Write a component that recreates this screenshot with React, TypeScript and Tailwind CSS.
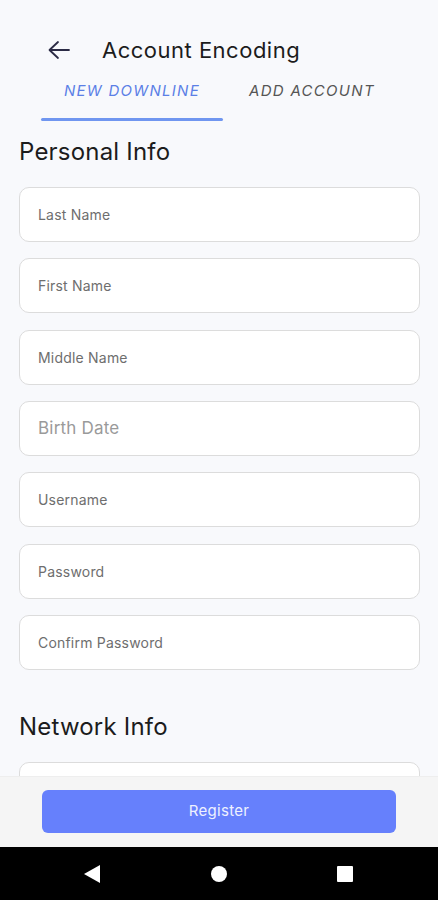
import React from "react";

const personal = [
  "Last Name",
  "First Name",
  "Middle Name",
  "Birth Date",
  "Username",
  "Password",
  "Confirm Password",
];

function Field({ label }: { label: string }) {
  const big = label === "Birth Date";
  return (
    <div className="h-[55px] w-full rounded-[10px] border border-[#dcdcdc] bg-white flex items-center pl-[18px]">
      <span
        className={
          big
            ? "text-[17px] text-[#9a9a9a] tracking-[0.2px]"
            : "text-[14px] text-[#6e6e6e] tracking-[0.2px]"
        }
      >
        {label}
      </span>
    </div>
  );
}

export default function App() {
  return (
    <div className="w-[438px] h-[900px] bg-[#f8f9fc] flex flex-col overflow-hidden font-['Inter',sans-serif]">
      <div className="flex-1 overflow-hidden flex flex-col">
        {/* header */}
        <div className="pt-[35px] h-[65px] flex items-center">
          <div className="h-[30px] flex items-center pl-[47px]">
            <svg width="24" height="20" viewBox="0 0 24 20" fill="none">
              <path
                d="M22 10H3M11 2L2.5 10L11 18"
                stroke="#2b2b45"
                strokeWidth="1.8"
                strokeLinecap="round"
                strokeLinejoin="round"
              />
            </svg>
            <span className="ml-[31px] text-[22px] text-[#1c1c1c] leading-[30px] tracking-[0.5px]">
              Account Encoding
            </span>
          </div>
        </div>
        {/* tabs */}
        <div className="flex pl-[41px]">
          <div className="w-[182px] flex flex-col">
            <div className="h-[53px] flex items-center justify-center">
              <span className="italic text-[15px] tracking-[1.3px] text-[#5b7fe6]">
                NEW DOWNLINE
              </span>
            </div>
            <div className="h-[3px] bg-[#7096f0] rounded-full" />
          </div>
          <div className="w-[178px] flex flex-col">
            <div className="h-[53px] flex items-center justify-center">
              <span className="italic text-[15px] tracking-[1.3px] text-[#555555]">
                ADD ACCOUNT
              </span>
            </div>
          </div>
        </div>
        {/* content */}
        <div className="pl-[19px] pr-[18px] pt-[15px]">
          <div className="text-[24px] leading-[32px] text-[#1c1c1c] tracking-[0.2px]">Personal Info</div>
          <div className="mt-[19px] flex flex-col gap-[16.33px]">
            {personal.map((p) => (
              <Field key={p} label={p} />
            ))}
          </div>
          <div className="mt-[41px] text-[24px] leading-[32px] text-[#1c1c1c] tracking-[0.2px]">Network Info</div>
          <div className="mt-[19px] flex flex-col gap-[16.33px]">
            <Field label="" />
          </div>
        </div>
      </div>
      {/* bottom bar */}
      <div className="h-[71px] shrink-0 bg-[#f5f5f5] border-t border-[#eeeeee] px-[42px] pt-[13px]">
        <div className="h-[43px] w-[354px] rounded-[6px] bg-[#6680fc] flex items-center justify-center">
          <span className="text-[15px] text-[#eef1ff] tracking-[0.3px]">Register</span>
        </div>
      </div>
      {/* nav bar */}
      <div className="h-[53px] shrink-0 bg-black flex items-center">
        <div className="w-full flex items-center justify-between pl-[84px] pr-[85px]">
          <svg width="16" height="18" viewBox="0 0 16 18">
            <path d="M16 0V18L0 9Z" fill="white" />
          </svg>
          <div className="w-[16px] h-[16px] rounded-full bg-white" />
          <div className="w-[16px] h-[16px] rounded-[1px] bg-white" />
        </div>
      </div>
    </div>
  );
}
